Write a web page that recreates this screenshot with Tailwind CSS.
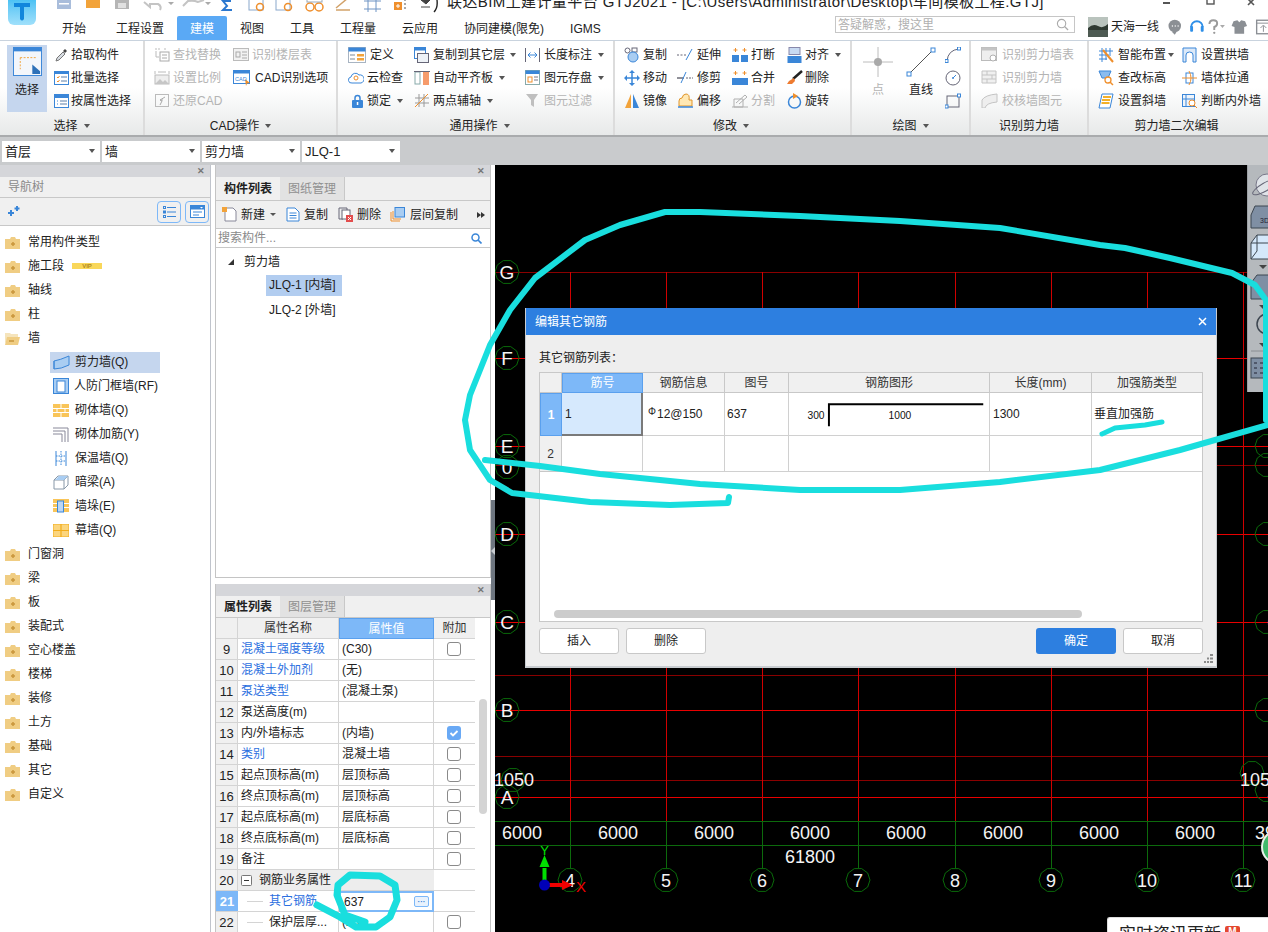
<!DOCTYPE html>
<html lang="zh"><head><meta charset="utf-8"><title>GTJ2021</title>
<script src="https://cdn.jsdelivr.net/npm/@tailwindcss/browser@4"></script></head>
<body class="m-0 bg-white">
<div class="relative w-[1268px] h-[932px] overflow-hidden flex flex-col text-[12px] leading-none text-[#222] font-['Liberation_Sans','Noto_Sans_CJK_SC',sans-serif]">

<!-- title strip -->
<header class="relative h-[40px] shrink-0 bg-white">
  <div class="absolute left-[8px] top-0 w-[28px] h-[25px] rounded-b-[6px] bg-gradient-to-b from-[#4cc2f4] to-[#9fe0fb] flex justify-center">
    <svg viewBox="0 0 28 25" class="w-[28px] h-[25px]"><path d="M6 3h16v4h-6v12q-2 3-4 0V7H6z" fill="#1186dc"/></svg>
  </div>
  <div class="flex h-[15px] overflow-hidden">
    <svg viewBox="0 0 440 15" class="w-[440px] h-[15px] shrink-0">
      <rect x="57" y="-4" width="14" height="13" fill="#a9bddb"/><rect x="59" y="3" width="10" height="1.5" fill="#fff"/>
      <rect x="86" y="-4" width="14" height="12" fill="#f2a33a"/>
      <rect x="115" y="-4" width="14" height="13" fill="#b5b5b5"/><rect x="118" y="3" width="8" height="5" fill="#e0e0e0"/>
      <path d="M144 2l6 5v-3h8q4 2 2 6M183 6l5-5q6-1 10 1l6-2" fill="none" stroke="#c4c4c4" stroke-width="2"/>
      <path d="M168 2l6 0-3 3zM205 2l6 0-3 3z" fill="#aaa"/>
      <path d="M231 1h-8l4 5-4 4h9" fill="none" stroke="#2b78d0" stroke-width="2"/>
      <rect x="249" y="-3" width="14" height="13" fill="#fff" stroke="#8aa8cc"/><circle cx="260" cy="7" r="3.5" fill="none" stroke="#ef8f2c" stroke-width="1.5"/>
      <rect x="276" y="-3" width="14" height="13" fill="#fff" stroke="#8aa8cc"/><circle cx="288" cy="7" r="3.5" fill="none" stroke="#ef8f2c" stroke-width="1.5"/>
      <circle cx="310" cy="7" r="4" fill="none" stroke="#ef8f2c" stroke-width="1.5"/><circle cx="319" cy="7" r="4" fill="none" stroke="#ef8f2c" stroke-width="1.5"/><rect x="307" y="-3" width="15" height="5" fill="none" stroke="#9ab"/>
      <path d="M336 8l12-10M336 10h14" stroke="#d2a26a" stroke-width="1.5" fill="none"/>
      <path d="M364 1h17M364 9h17M368 0v12M376 0v12" stroke="#6f94c4" fill="none"/>
      <rect x="394" y="2" width="8" height="8" fill="#ef8f2c"/><path d="M396 6h4M398 4v4" stroke="#fff"/><path d="M404 0h2M404 4h2M404 8h2" stroke="#555"/>
      <path d="M421 0h9l-4 4zM421 7h9" fill="#444" stroke="#444"/><path d="M434 12q4-4 3-12" stroke="#222" stroke-width="1.4" fill="none"/>
    </svg>
    <div class="ml-[7px] text-[15px] leading-[18px] -mt-[7px] whitespace-nowrap tracking-[0.4px]">联达BIM土建计量平台 GTJ2021 - [C:\Users\Administrator\Desktop\车间模板工程.GTJ]</div>
  </div>
  <div class="absolute right-[6px] top-0 flex items-start">
    <svg viewBox="0 0 100 6" class="w-[100px] h-[6px]"><path d="M1 3h7" stroke="#555" stroke-width="2"/><rect x="45" y="-3" width="7" height="7" fill="none" stroke="#555" stroke-width="1.4"/><path d="M86 -1l6 6M92 -1l-6 6" stroke="#555" stroke-width="1.6"/></svg>
  </div>
  <nav class="absolute left-[62px] top-[16px] h-[24px] flex items-end">
    <span class="pb-[5px]">开始</span><span class="ml-[30px] pb-[5px]">工程设置</span>
    <span class="ml-[13px] w-[50px] h-[24px] flex items-end justify-center pb-[5px] rounded-t-[2px] bg-[#5aa9f5] text-white">建模</span>
    <span class="ml-[13px] pb-[5px]">视图</span><span class="ml-[26px] pb-[5px]">工具</span><span class="ml-[26px] pb-[5px]">工程量</span><span class="ml-[26px] pb-[5px]">云应用</span><span class="ml-[26px] pb-[5px]">协同建模(限免)</span><span class="ml-[26px] pb-[5px]">IGMS</span>
  </nav>
  <div class="absolute left-[835px] top-[16px] w-[240px] h-[17px] border border-[#c6c6c6] flex items-center justify-between px-[2px] text-[#b0b0b0]">
    <span>答疑解惑，搜这里</span>
    <svg viewBox="0 0 14 14" class="w-[13px] h-[13px] mr-[3px]"><circle cx="6" cy="6" r="4.5" fill="none" stroke="#aaa" stroke-width="1.2"/><path d="M9.5 9.5L13 13" stroke="#aaa" stroke-width="1.4"/></svg>
  </div>
  <div class="absolute left-[1088px] top-[17px] flex items-center h-[20px] whitespace-nowrap">
    <svg viewBox="0 0 20 20" class="w-[20px] h-[20px] shrink-0"><rect width="20" height="20" fill="#b9c3bd"/><rect y="11" width="20" height="9" fill="#4d5a52"/><path d="M0 11q5-5 10-2t10-2v6H0z" fill="#2f3a32"/></svg>
    <span class="ml-[3px] shrink-0">天海一线</span>
    <svg viewBox="0 0 110 20" class="w-[106px] h-[20px] ml-[9px] shrink-0">
      <circle cx="7" cy="9" r="6.5" fill="#8b8f94"/><path d="M4 15l3 3 2-3z" fill="#8b8f94"/><path d="M4 9h1M7 9h1M10 9h1" stroke="#fff" stroke-width="1.4"/>
      <path d="M24 10a6 6 0 0 1 12 0" fill="none" stroke="#2e8fe8" stroke-width="2"/><rect x="23" y="9" width="3" height="6" rx="1" fill="#2e8fe8"/><rect x="34" y="9" width="3" height="6" rx="1" fill="#2e8fe8"/>
      <path d="M43 7q0-4 4-4t4 3q0 3-3 4v3" fill="none" stroke="#9a9a9a" stroke-width="2"/><circle cx="48" cy="16" r="1.2" fill="#9a9a9a"/><path d="M54 8h5l-2.500 3z" fill="#aaa"/>
      <path d="M68 4l4-1 2 2 2-2 4 1 2 5-3 1v7H69v-7l-3-1z" fill="#8b8f94"/>
      <rect x="92" y="3" width="14" height="14" fill="none" stroke="#8b8f94" stroke-width="1.4"/><path d="M92 6h14M99 15V9M96 11l3-3 3 3" stroke="#8b8f94" fill="none"/>
    </svg>
  </div>
</header>

<!-- ribbon -->
<section class="h-[97px] shrink-0 flex border-t border-[#c9d3de] border-b-2 border-b-[#a9abad] bg-gradient-to-b from-white via-white to-[#e7e9e9]">

  <!-- 选择 -->
  <div class="w-[145px] shrink-0 flex flex-col border-r-2 border-[#dcdcdc]">
    <div class="h-[75px] pt-[4px] pl-[7px] flex">
      <div class="w-[40px] h-[67px] bg-[#c5d6ee] flex flex-col items-center pt-[2px]">
        <svg viewBox="0 0 30 30" class="w-[29px] h-[29px]"><rect x=".5" y=".5" width="29" height="29" fill="#f3f6fb" stroke="#3a86d8"/><rect x=".5" y=".5" width="29" height="4" fill="#3a86d8"/><path d="M7.500 11h16M7.500 11v12" fill="none" stroke="#f2a33a" stroke-dasharray="2 1.500"/><path d="M20 18l8 7v3h-8z" fill="#2d70b8"/></svg>
        <span class="mt-[8px]">选择</span>
      </div>
      <div class="ml-[7px] -mt-[2px] flex flex-col">
        <div class="flex items-center h-[23px]"><span class="w-[17px]"><svg viewBox="0 0 14 14" class="w-[14px] h-[14px]"><path d="M2 13l1-3 6-6 2 2-6 6z" fill="#d7dce2" stroke="#777"/><path d="M9 3l2-2 2 2-2 2z" fill="#444"/></svg></span>拾取构件</div>
        <div class="flex items-center h-[23px]"><span class="w-[17px]"><svg viewBox="0 0 15 14" class="w-[15px] h-[14px]"><rect x=".5" y=".5" width="14" height="13" fill="#fff" stroke="#3a86d8"/><rect x=".5" y=".5" width="14" height="2.500" fill="#3a86d8"/><path d="M3 6l1 1 1.500-2M3 10l1 1 1.500-2" stroke="#ef8f2c" fill="none"/><path d="M7 6h6M7 10h6" stroke="#5b7fa8"/></svg></span>批量选择</div>
        <div class="flex items-center h-[23px]"><span class="w-[17px]"><svg viewBox="0 0 15 14" class="w-[15px] h-[14px]"><rect x=".5" y=".5" width="14" height="13" fill="#fff" stroke="#3a86d8"/><rect x=".5" y=".5" width="14" height="3.500" fill="#3a86d8"/><path d="M3 7h1M3 10h1" stroke="#3a86d8"/><path d="M6 7h7M6 10h7" stroke="#5b7fa8"/></svg></span>按属性选择</div>
      </div>
    </div>
    <div class="flex items-center justify-center h-[19px] gap-[6px]">选择<span class="w-0 h-0 border-x-[3.500px] border-x-transparent border-t-[4px] border-t-[#555]"></span></div>
  </div>

  <!-- CAD -->
  <div class="w-[193px] shrink-0 flex flex-col border-r-2 border-[#dcdcdc] text-[#b4b4b4]">
    <div class="h-[75px] pt-[2px] pl-[9px] flex">
      <div class="w-[79px] flex flex-col">
        <div class="flex items-center h-[23px]"><span class="w-[19px]"><svg viewBox="0 0 16 15" class="w-[16px] h-[15px]"><path d="M1 2h6M10 2h3" stroke="#bbb" stroke-dasharray="2 1"/><rect x="6" y="5" width="9" height="9" fill="none" stroke="#aaa"/><path d="M8 8h5M8 11h5" stroke="#aaa"/><path d="M2 4v6h3" stroke="#bbb" fill="none"/></svg></span>查找替换</div>
        <div class="flex items-center h-[23px]"><span class="w-[19px]"><svg viewBox="0 0 16 15" class="w-[16px] h-[15px]"><rect x="1" y="5" width="14" height="9" fill="#eee" stroke="#bbb"/><path d="M1 14l5-5 3 3 2-2 4 4z" fill="#c6c6c6"/><path d="M1 1v3M15 1v3M4 2h8" stroke="#bbb"/></svg></span>设置比例</div>
        <div class="flex items-center h-[23px]"><span class="w-[19px]"><svg viewBox="0 0 16 15" class="w-[16px] h-[15px]"><rect x="1.500" y="1.500" width="13" height="12" fill="none" stroke="#bbb"/><path d="M11 4l-5 3 2 1-2 4M6 7l3 0" stroke="#aaa" fill="none"/></svg></span>还原CAD</div>
      </div>
      <div class="flex flex-col">
        <div class="flex items-center h-[23px]"><span class="w-[19px]"><svg viewBox="0 0 16 14" class="w-[16px] h-[14px]"><rect x=".5" y=".5" width="15" height="12" fill="#f2f2f2" stroke="#bbb"/><rect x="3" y="4" width="4" height="5" fill="none" stroke="#aaa"/><path d="M9 4h5M9 7h5M9 10h5" stroke="#aaa"/></svg></span>识别楼层表</div>
        <div class="flex items-center h-[23px] text-[#222]"><span class="w-[22px]"><svg viewBox="0 0 18 16" class="w-[18px] h-[16px]"><rect x=".5" y=".5" width="16" height="13" fill="#fff" stroke="#3a86d8"/><rect x=".5" y=".5" width="16" height="3" fill="#3a86d8"/><path d="M12 9l5 4-3 .5-1 2.500z" fill="#ef8f2c"/><text x="2" y="11" font-size="5.500" fill="#3a86d8">CAD</text></svg></span>CAD识别选项</div>
      </div>
    </div>
    <div class="flex items-center justify-center h-[19px] gap-[6px] text-[#222]">CAD操作<span class="w-0 h-0 border-x-[3.500px] border-x-transparent border-t-[4px] border-t-[#555]"></span></div>
  </div>

  <!-- 通用操作 -->
  <div class="w-[277px] shrink-0 flex flex-col border-r-2 border-[#dcdcdc]">
    <div class="h-[75px] pt-[2px] pl-[10px] flex">
      <div class="w-[66px] flex flex-col">
        <div class="flex items-center h-[23px]"><span class="w-[22px]"><svg viewBox="0 0 18 16" class="w-[18px] h-[16px]"><rect x=".5" y=".5" width="17" height="15" fill="#fff" stroke="#a8b4c2"/><rect x=".5" y=".5" width="17" height="4" fill="#3a86d8"/><rect x="9" y="7" width="7" height="2.500" fill="#f2a33a"/><rect x="9" y="11" width="7" height="2.500" fill="#f2a33a"/><path d="M2 8h5M2 12h5" stroke="#7a8a9a"/></svg></span>定义</div>
        <div class="flex items-center h-[23px]"><span class="w-[19px]"><svg viewBox="0 0 16 12" class="w-[16px] h-[12px]"><path d="M4 11a3 3 0 0 1-1-6 4.500 4.500 0 0 1 8-2 4 4 0 0 1 2 8z" fill="#fff" stroke="#3a86d8"/><circle cx="8" cy="6" r="2" fill="none" stroke="#ef8f2c"/></svg></span>云检查</div>
        <div class="flex items-center h-[23px]"><span class="w-[19px] pl-[4px]"><svg viewBox="0 0 11 14" class="w-[11px] h-[14px]"><path d="M3 6V4a2.500 2.500 0 0 1 5 0v2" fill="none" stroke="#3a86d8" stroke-width="1.500"/><rect y="6" width="11" height="8" rx="1" fill="#3a86d8"/><rect x="4.800" y="8" width="1.500" height="3" fill="#fff"/></svg></span>锁定<span class="ml-[6px] w-0 h-0 border-x-[3px] border-x-transparent border-t-[4px] border-t-[#555]"></span></div>
      </div>
      <div class="w-[111px] flex flex-col">
        <div class="flex items-center h-[23px]"><span class="w-[19px]"><svg viewBox="0 0 15 16" class="w-[15px] h-[16px]"><rect x=".5" y=".5" width="11" height="11" fill="#fff" stroke="#3a86d8"/><rect x=".5" y=".5" width="11" height="3" fill="#3a86d8"/><rect x="3.500" y="6.500" width="11" height="9" fill="#eef2f7" stroke="#667"/></svg></span>复制到其它层<span class="ml-[5px] w-0 h-0 border-x-[3px] border-x-transparent border-t-[4px] border-t-[#555]"></span></div>
        <div class="flex items-center h-[23px]"><span class="w-[19px]"><svg viewBox="0 0 16 14" class="w-[16px] h-[14px]"><rect x="1" y="1" width="5" height="12" fill="#fff" stroke="#8aa"/><rect x="9" y="1" width="6" height="13" fill="#f69b6b"/><path d="M0 .5h16" stroke="#667"/></svg></span>自动平齐板<span class="ml-[6px] w-0 h-0 border-x-[3px] border-x-transparent border-t-[4px] border-t-[#555]"></span></div>
        <div class="flex items-center h-[23px]"><span class="w-[19px]"><svg viewBox="0 0 15 15" class="w-[15px] h-[15px]"><path d="M1 5h14M1 10h14M5 1v13M10 1v13" stroke="#999"/><path d="M1 14L14 1" stroke="#ef8f2c"/></svg></span>两点辅轴<span class="ml-[6px] w-0 h-0 border-x-[3px] border-x-transparent border-t-[4px] border-t-[#555]"></span></div>
      </div>
      <div class="flex flex-col">
        <div class="flex items-center h-[23px]"><span class="w-[19px]"><svg viewBox="0 0 15 14" class="w-[15px] h-[14px]"><path d="M.5 0v14M14.500 0v14" stroke="#667"/><path d="M3 7h9M3 7l2.500-2.500M3 7l2.500 2.500M12 7l-2.500-2.500M12 7l-2.500 2.500" stroke="#3a86d8" fill="none"/></svg></span>长度标注<span class="ml-[6px] w-0 h-0 border-x-[3px] border-x-transparent border-t-[4px] border-t-[#555]"></span></div>
        <div class="flex items-center h-[23px]"><span class="w-[19px]"><svg viewBox="0 0 15 15" class="w-[15px] h-[15px]"><rect x=".5" y=".5" width="14" height="14" fill="#fff" stroke="#8aa"/><rect x=".5" y=".5" width="14" height="3.500" fill="#3a86d8"/><rect x="3" y="7" width="4" height="5" fill="none" stroke="#ef8f2c"/><path d="M9 7h4M9 10h4" stroke="#778"/></svg></span>图元存盘<span class="ml-[6px] w-0 h-0 border-x-[3px] border-x-transparent border-t-[4px] border-t-[#555]"></span></div>
        <div class="flex items-center h-[23px] text-[#b4b4b4]"><span class="w-[19px]"><svg viewBox="0 0 15 15" class="w-[15px] h-[15px]"><path d="M1 1h12L9 7v7l-3-2V7z" fill="#bfbfbf"/></svg></span>图元过滤</div>
      </div>
    </div>
    <div class="flex items-center justify-center h-[19px] gap-[6px] pl-[8px]">通用操作<span class="w-0 h-0 border-x-[3.500px] border-x-transparent border-t-[4px] border-t-[#555]"></span></div>
  </div>

  <!-- 修改 -->
  <div class="w-[237px] shrink-0 flex flex-col border-r-2 border-[#dcdcdc]">
    <div class="h-[75px] pt-[2px] pl-[9px] flex">
      <div class="w-[53px] flex flex-col">
        <div class="flex items-center h-[23px]"><span class="w-[19px]"><svg viewBox="0 0 16 16" class="w-[16px] h-[16px]"><circle cx="3.500" cy="3.500" r="2.500" fill="none" stroke="#667"/><rect x="8" y="1" width="5" height="4" fill="none" stroke="#667"/><circle cx="9" cy="10" r="5" fill="#a9cdf2" stroke="#3a86d8"/></svg></span>复制</div>
        <div class="flex items-center h-[23px]"><span class="w-[19px]"><svg viewBox="0 0 16 16" class="w-[16px] h-[16px]"><path d="M8 1v14M1 8h14" stroke="#3a86d8" stroke-width="1.500"/><path d="M8 0l3 3H5zM8 16l3-3H5zM0 8l3-3v6zM16 8l-3-3v6z" fill="#3a86d8"/></svg></span>移动</div>
        <div class="flex items-center h-[23px]"><span class="w-[19px]"><svg viewBox="0 0 16 15" class="w-[16px] h-[15px]"><path d="M7 1v14H1z" fill="#f2a33a"/><path d="M9 1v14h6z" fill="#3a86d8"/></svg></span>镜像</div>
      </div>
      <div class="w-[55px] flex flex-col">
        <div class="flex items-center h-[23px]"><span class="w-[20px]"><svg viewBox="0 0 17 15" class="w-[17px] h-[15px]"><path d="M0 8h10" stroke="#667" stroke-dasharray="2 1.500"/><path d="M9 13L15 2" stroke="#3a86d8"/></svg></span>延伸</div>
        <div class="flex items-center h-[23px]"><span class="w-[20px]"><svg viewBox="0 0 17 15" class="w-[17px] h-[15px]"><path d="M0 8h7" stroke="#223"/><path d="M9 8h7" stroke="#667" stroke-dasharray="2 1"/><path d="M4 13L9 2" stroke="#3a86d8"/></svg></span>修剪</div>
        <div class="flex items-center h-[23px]"><span class="w-[20px]"><svg viewBox="0 0 17 15" class="w-[17px] h-[15px]"><path d="M2 13V8q0-3 3-3 1-4 4-4 4 0 3 6h3v6z" fill="#ffe8b4" stroke="#e0952a"/><path d="M1 14h15" stroke="#3a86d8" stroke-width="1.500"/></svg></span>偏移</div>
      </div>
      <div class="w-[55px] flex flex-col">
        <div class="flex items-center h-[23px]"><span class="w-[19px]"><svg viewBox="0 0 16 15" class="w-[16px] h-[15px]"><rect y="8" width="7" height="7" fill="#3a86d8"/><rect x="9" y="8" width="7" height="7" fill="#3a86d8"/><path d="M3.500 1v4M1.500 3h4M12.500 1v4M10.500 3h4" stroke="#ef8f2c"/></svg></span>打断</div>
        <div class="flex items-center h-[23px]"><span class="w-[19px]"><svg viewBox="0 0 16 15" class="w-[16px] h-[15px]"><rect y="8" width="16" height="7" fill="#3a86d8"/><path d="M3.500 1v4M1.500 3h4M12.500 1v4M10.500 3h4" stroke="#ef8f2c"/></svg></span>合并</div>
        <div class="flex items-center h-[23px] text-[#b4b4b4]"><span class="w-[19px]"><svg viewBox="0 0 16 15" class="w-[16px] h-[15px]"><path d="M2 14V6h9v8zM0 14h16M4 10l9-8 2 2-8 7" fill="none" stroke="#b0b0b0"/></svg></span>分割</div>
      </div>
      <div class="flex flex-col">
        <div class="flex items-center h-[23px]"><span class="w-[18px]"><svg viewBox="0 0 15 16" class="w-[15px] h-[16px]"><rect x="2" y=".5" width="11" height="7" fill="#c8daf2" stroke="#88a"/><rect x=".5" y="9" width="14" height="7" fill="#3a86d8"/></svg></span>对齐<span class="ml-[6px] w-0 h-0 border-x-[3px] border-x-transparent border-t-[4px] border-t-[#555]"></span></div>
        <div class="flex items-center h-[23px]"><span class="w-[18px]"><svg viewBox="0 0 16 15" class="w-[16px] h-[15px]"><path d="M15 1L6 9" stroke="#222" stroke-width="2.500"/><path d="M7 8l-5 3-2 3h5l3-3z" fill="#ee7b30"/></svg></span>删除</div>
        <div class="flex items-center h-[23px]"><span class="w-[18px]"><svg viewBox="0 0 15 16" class="w-[15px] h-[16px]"><circle cx="7.500" cy="9" r="6" fill="none" stroke="#3a86d8" stroke-width="1.500"/><path d="M6 0l5 3-5 3z" fill="#ef8f2c"/></svg></span>旋转</div>
      </div>
    </div>
    <div class="flex items-center justify-center h-[19px] gap-[6px] pr-[3px]">修改<span class="w-0 h-0 border-x-[3.500px] border-x-transparent border-t-[4px] border-t-[#555]"></span></div>
  </div>

  <!-- 绘图 -->
  <div class="w-[119px] shrink-0 flex flex-col border-r-2 border-[#dcdcdc]">
    <div class="h-[75px] pt-[6px] pl-[11px] flex">
      <div class="w-[30px] flex flex-col items-center text-[#b4b4b4]">
        <svg viewBox="0 0 30 30" class="w-[30px] h-[30px]"><path d="M15 0v30M0 15h30" stroke="#bcbcbc"/><circle cx="15" cy="15" r="4" fill="#a9a9a9"/></svg>
        <span class="mt-[7px]">点</span>
      </div>
      <div class="ml-[13px] w-[30px] flex flex-col items-center">
        <svg viewBox="0 0 30 30" class="w-[30px] h-[30px]"><path d="M3 27L27 3" stroke="#555"/><rect x="1" y="25" width="4" height="4" fill="#fff" stroke="#3a86d8"/><rect x="25" y="1" width="4" height="4" fill="#fff" stroke="#3a86d8"/></svg>
        <span class="mt-[7px]">直线</span>
      </div>
      <div class="ml-[9px] -mt-[4px] flex flex-col">
        <span class="h-[23px] flex items-center"><svg viewBox="0 0 16 16" class="w-[16px] h-[16px]"><path d="M2 14Q3 3 14 2" fill="none" stroke="#667"/><rect x="0" y="12.500" width="3" height="3" fill="#fff" stroke="#3a86d8"/><rect x="12.500" y="0" width="3" height="3" fill="#fff" stroke="#3a86d8"/></svg></span>
        <span class="h-[23px] flex items-center"><svg viewBox="0 0 16 16" class="w-[16px] h-[16px]"><circle cx="8" cy="8" r="7" fill="none" stroke="#667"/><path d="M8 8l3-3" stroke="#3a86d8"/><circle cx="8" cy="8" r="1" fill="#3a86d8"/></svg></span>
        <span class="h-[23px] flex items-center"><svg viewBox="0 0 16 16" class="w-[16px] h-[16px]"><rect x="2" y="3" width="12" height="11" fill="none" stroke="#667"/><rect x="0" y="12" width="3" height="3" fill="#fff" stroke="#3a86d8"/><rect x="12.500" y="1" width="3" height="3" fill="#fff" stroke="#3a86d8"/></svg></span>
      </div>
    </div>
    <div class="flex items-center justify-center h-[19px] gap-[6px]">绘图<span class="w-0 h-0 border-x-[3.500px] border-x-transparent border-t-[4px] border-t-[#555]"></span></div>
  </div>

  <!-- 识别剪力墙 -->
  <div class="w-[118px] shrink-0 flex flex-col border-r-2 border-[#dcdcdc]">
    <div class="h-[75px] pt-[2px] pl-[10px] flex flex-col text-[#b4b4b4]">
      <div class="flex items-center h-[23px]"><span class="w-[21px]"><svg viewBox="0 0 17 15" class="w-[17px] h-[15px]"><rect x=".5" y=".5" width="15" height="13" fill="#eee" stroke="#bbb"/><rect x=".5" y=".5" width="15" height="3" fill="#c4c4c4"/><circle cx="12" cy="11" r="3" fill="#fff" stroke="#b0b0b0"/></svg></span>识别剪力墙表</div>
      <div class="flex items-center h-[23px]"><span class="w-[21px]"><svg viewBox="0 0 17 15" class="w-[17px] h-[15px]"><path d="M1 1h14v12H1zM1 5h14M1 9h14M6 1v4M11 5v4M6 9v4" fill="#f0f0f0" stroke="#c4c4c4"/></svg></span>识别剪力墙</div>
      <div class="flex items-center h-[23px]"><span class="w-[21px]"><svg viewBox="0 0 17 15" class="w-[17px] h-[15px]"><path d="M1 15V7q3-5 15-6v8Q5 10 4 15z" fill="#eee" stroke="#c4c4c4"/></svg></span>校核墙图元</div>
    </div>
    <div class="flex items-center justify-center h-[19px]">识别剪力墙</div>
  </div>

  <!-- 二次编辑 -->
  <div class="flex-1 flex flex-col">
    <div class="h-[75px] pt-[2px] pl-[9px] flex">
      <div class="w-[84px] flex flex-col">
        <div class="flex items-center h-[23px]"><span class="w-[20px]"><svg viewBox="0 0 16 16" class="w-[16px] h-[16px]"><path d="M1 4h14M1 8h10M1 12h8M4 1v14M8 1v12M12 1v8" stroke="#3a86d8"/><path d="M5 3l10 12" stroke="#ef8f2c" stroke-width="2"/></svg></span>智能布置<span class="ml-[2px] w-0 h-0 border-x-[3px] border-x-transparent border-t-[4px] border-t-[#555]"></span></div>
        <div class="flex items-center h-[23px]"><span class="w-[20px]"><svg viewBox="0 0 16 16" class="w-[16px] h-[16px]"><path d="M1 1h12l-3 7H4z" fill="#8bbcef" stroke="#3a86d8"/><circle cx="10" cy="10" r="3" fill="#fff" stroke="#ef8f2c" stroke-width="1.300"/><path d="M12 12l3 3" stroke="#ef8f2c" stroke-width="1.500"/></svg></span>查改标高</div>
        <div class="flex items-center h-[23px]"><span class="w-[20px]"><svg viewBox="0 0 16 16" class="w-[16px] h-[16px]"><path d="M4 1h11l-3 14H1z" fill="#fff" stroke="#3a86d8"/><path d="M5 4h8M4 7h8M3.500 10h8" stroke="#f2b02a" stroke-width="2"/></svg></span>设置斜墙</div>
      </div>
      <div class="flex flex-col">
        <div class="flex items-center h-[23px]"><span class="w-[19px]"><svg viewBox="0 0 15 16" class="w-[15px] h-[16px]"><path d="M1 1h13v14h-3V8q0-3-3.500-3T4 8v7H1z" fill="#dce9f8" stroke="#3a86d8"/></svg></span>设置拱墙</div>
        <div class="flex items-center h-[23px]"><span class="w-[19px]"><svg viewBox="0 0 15 16" class="w-[15px] h-[16px]"><rect x="4" y="3" width="7" height="10" fill="none" stroke="#3a86d8"/><path d="M0 8h15M7 1q4 7 0 14" fill="none" stroke="#ef8f2c"/></svg></span>墙体拉通</div>
        <div class="flex items-center h-[23px]"><span class="w-[19px]"><svg viewBox="0 0 15 16" class="w-[15px] h-[16px]"><rect x=".5" y="1.500" width="12" height="12" fill="#eef4fb" stroke="#3a86d8"/><path d="M4 1v12M.5 6h12" stroke="#3a86d8"/><circle cx="10" cy="10" r="3" fill="#fff" stroke="#ef8f2c"/><path d="M12 12l3 3" stroke="#ef8f2c"/></svg></span>判断内外墙</div>
      </div>
    </div>
    <div class="flex items-center justify-center h-[19px] pr-[4px]">剪力墙二次编辑</div>
  </div>
</section>

<!-- selector bar -->
<section class="h-[28px] shrink-0 bg-[#c9cbcd] flex items-center pl-[2px] gap-[2px] text-[13px]">
  <div class="w-[98px] h-[21px] bg-white flex items-center justify-between px-[3px]">首层<span class="w-0 h-0 border-x-[3px] border-x-transparent border-t-[4px] border-t-[#555] mr-[2px]"></span></div>
  <div class="w-[98px] h-[21px] bg-white flex items-center justify-between px-[3px]">墙<span class="w-0 h-0 border-x-[3px] border-x-transparent border-t-[4px] border-t-[#555] mr-[2px]"></span></div>
  <div class="w-[98px] h-[21px] bg-white flex items-center justify-between px-[3px]">剪力墙<span class="w-0 h-0 border-x-[3px] border-x-transparent border-t-[4px] border-t-[#555] mr-[2px]"></span></div>
  <div class="w-[98px] h-[21px] bg-white flex items-center justify-between px-[3px]">JLQ-1<span class="w-0 h-0 border-x-[3px] border-x-transparent border-t-[4px] border-t-[#555] mr-[2px]"></span></div>
</section>

<!-- main -->
<main class="relative flex-1 flex min-h-0">

  <!-- nav tree -->
  <aside class="w-[211px] shrink-0 border-r border-[#c0c4cc] flex flex-col bg-white">
    <div class="h-[12px] bg-[#d5d6da] flex items-center justify-end pr-[5px] text-[9px] font-bold text-[#777]">✕</div>
    <div class="h-[21px] bg-[#f0f0f0] border-b border-[#c8c8c8] flex items-center pl-[8px] text-[#8a8a8a]">导航树</div>
    <div class="h-[28px] bg-[#f0f0f0] border-b border-[#c8c8c8] flex items-center justify-between pl-[7px] pr-[1px]">
      <svg viewBox="0 0 13 11" class="w-[13px] h-[11px]"><path d="M4 4v6M1 7h6M10 0v5M7.500 2.500h5" stroke="#3a86d8" stroke-width="2"/></svg>
      <div class="flex gap-[4px]">
        <span class="w-[24px] h-[22px] rounded-[4px] border border-[#7db8f8] flex items-center justify-center"><svg viewBox="0 0 13 12" class="w-[13px] h-[12px]"><path d="M4 1.500h9M4 6h9M4 10.500h9" stroke="#3a86d8"/><rect x=".5" y=".5" width="2" height="2" fill="none" stroke="#3a86d8"/><rect x=".5" y="5" width="2" height="2" fill="none" stroke="#3a86d8"/><rect x=".5" y="9.500" width="2" height="2" fill="none" stroke="#3a86d8"/></svg></span>
        <span class="w-[24px] h-[22px] rounded-[4px] border border-[#7db8f8] flex items-center justify-center"><svg viewBox="0 0 15 13" class="w-[15px] h-[13px]"><rect x=".5" y=".5" width="14" height="12" fill="#fff" stroke="#3a86d8"/><rect x=".5" y=".5" width="14" height="4" fill="#3a86d8"/><path d="M3 7h9M3 10h6" stroke="#3a86d8"/><path d="M10 2h3l-1.500 1.500z" fill="#fff"/></svg></span>
      </div>
    </div>
    <ul class="pt-[4px]">
      <li class="h-[24px] flex items-center pl-[5px]"><svg viewBox="0 0 15 13" class="w-[15px] h-[13px] mr-[8px]"><path d="M0 3h5l1-2h4l1 2h4v10H0z" fill="#f0cd83"/><path d="M6 8h4M8 6v4" stroke="#c9963c" stroke-width="1.500"/></svg>常用构件类型</li>
      <li class="h-[24px] flex items-center pl-[5px]"><svg viewBox="0 0 15 13" class="w-[15px] h-[13px] mr-[8px]"><path d="M0 3h5l1-2h4l1 2h4v10H0z" fill="#f0cd83"/><path d="M6 8h4M8 6v4" stroke="#c9963c" stroke-width="1.500"/></svg>施工段<span class="ml-[8px] w-[30px] h-[6px] bg-[#f9d75a] text-[6px] leading-[6px] text-center text-[#b08a20] font-bold">VIP</span></li>
      <li class="h-[24px] flex items-center pl-[5px]"><svg viewBox="0 0 15 13" class="w-[15px] h-[13px] mr-[8px]"><path d="M0 3h5l1-2h4l1 2h4v10H0z" fill="#f0cd83"/><path d="M6 8h4M8 6v4" stroke="#c9963c" stroke-width="1.500"/></svg>轴线</li>
      <li class="h-[24px] flex items-center pl-[5px]"><svg viewBox="0 0 15 13" class="w-[15px] h-[13px] mr-[8px]"><path d="M0 3h5l1-2h4l1 2h4v10H0z" fill="#f0cd83"/><path d="M6 8h4M8 6v4" stroke="#c9963c" stroke-width="1.500"/></svg>柱</li>
      <li class="h-[24px] flex items-center pl-[4px]"><svg viewBox="0 0 16 13" class="w-[16px] h-[13px] mr-[8px]"><path d="M1 1h5l1 1h7v3H4L1 12z" fill="#f5e4bc"/><path d="M3 5h13l-2 8H1z" fill="#f0cd83"/><path d="M5 9h5" stroke="#c9963c" stroke-width="1.500"/></svg>墙</li>
      <li class="h-[24px] flex items-center pl-[50px]"><span class="w-[110px] h-[21px] bg-[#c5d6ee] flex items-center pl-[3px]"><svg viewBox="0 0 17 15" class="w-[17px] h-[15px] mr-[5px]"><path d="M1 6q6-1 15-5v9q-8 4-15 4z" fill="#a9cdf2" stroke="#3a86d8"/><path d="M1 6v8" stroke="#3a86d8"/></svg>剪力墙(Q)</span></li>
      <li class="h-[24px] flex items-center pl-[53px]"><svg viewBox="0 0 16 16" class="w-[16px] h-[16px] mr-[5px]"><rect x=".5" y=".5" width="15" height="15" fill="#a9cdf2" stroke="#3a86d8"/><rect x="4" y="3" width="8" height="11" fill="#fff" stroke="#3a86d8"/></svg>人防门框墙(RF)</li>
      <li class="h-[24px] flex items-center pl-[53px]"><svg viewBox="0 0 16 13" class="w-[16px] h-[13px] mr-[6px]"><rect width="16" height="13" fill="#f9c559"/><path d="M0 4.500h16M0 8.500h16M8 0v4.500M4 4.500v4M12 4.500v4M8 8.500V13" stroke="#fff"/></svg>砌体墙(Q)</li>
      <li class="h-[24px] flex items-center pl-[53px]"><svg viewBox="0 0 16 15" class="w-[16px] h-[15px] mr-[6px]"><path d="M0 1h15v14M0 4h12v11M0 7h9v8" fill="none" stroke="#889"/></svg>砌体加筋(Y)</li>
      <li class="h-[24px] flex items-center pl-[53px]"><svg viewBox="0 0 16 15" class="w-[16px] h-[15px] mr-[6px]"><path d="M3 0v15M13 0v15" stroke="#3a86d8"/><path d="M8 0v15M3 5h10M3 10h10" stroke="#3a86d8" stroke-dasharray="1.500 1"/></svg>保温墙(Q)</li>
      <li class="h-[24px] flex items-center pl-[53px]"><svg viewBox="0 0 16 15" class="w-[16px] h-[15px] mr-[6px]"><path d="M1 5l4-4h10v9l-4 4H1zM1 5h10v9M11 5l4-4" fill="#fff" stroke="#8898a8"/><path d="M2 5l4-4h9l-4 4z" fill="#a9cdf2"/></svg>暗梁(A)</li>
      <li class="h-[24px] flex items-center pl-[53px]"><svg viewBox="0 0 16 14" class="w-[16px] h-[14px] mr-[6px]"><rect width="16" height="13" fill="#f9c559"/><path d="M0 4.500h16M0 8.500h16" stroke="#fff"/><rect x="4.500" y="2" width="6" height="11" fill="#bcd6f3" stroke="#3a86d8"/></svg>墙垛(E)</li>
      <li class="h-[24px] flex items-center pl-[53px]"><svg viewBox="0 0 16 13" class="w-[16px] h-[13px] mr-[6px]"><rect width="16" height="13" fill="#fbd57e" stroke="#f2ad1c"/><path d="M0 6.500h16M8 0v13" stroke="#f2ad1c" stroke-width="1.200"/></svg>幕墙(Q)</li>
      <li class="h-[24px] flex items-center pl-[5px]"><svg viewBox="0 0 15 13" class="w-[15px] h-[13px] mr-[8px]"><path d="M0 3h5l1-2h4l1 2h4v10H0z" fill="#f0cd83"/><path d="M6 8h4M8 6v4" stroke="#c9963c" stroke-width="1.500"/></svg>门窗洞</li>
      <li class="h-[24px] flex items-center pl-[5px]"><svg viewBox="0 0 15 13" class="w-[15px] h-[13px] mr-[8px]"><path d="M0 3h5l1-2h4l1 2h4v10H0z" fill="#f0cd83"/><path d="M6 8h4M8 6v4" stroke="#c9963c" stroke-width="1.500"/></svg>梁</li>
      <li class="h-[24px] flex items-center pl-[5px]"><svg viewBox="0 0 15 13" class="w-[15px] h-[13px] mr-[8px]"><path d="M0 3h5l1-2h4l1 2h4v10H0z" fill="#f0cd83"/><path d="M6 8h4M8 6v4" stroke="#c9963c" stroke-width="1.500"/></svg>板</li>
      <li class="h-[24px] flex items-center pl-[5px]"><svg viewBox="0 0 15 13" class="w-[15px] h-[13px] mr-[8px]"><path d="M0 3h5l1-2h4l1 2h4v10H0z" fill="#f0cd83"/><path d="M6 8h4M8 6v4" stroke="#c9963c" stroke-width="1.500"/></svg>装配式</li>
      <li class="h-[24px] flex items-center pl-[5px]"><svg viewBox="0 0 15 13" class="w-[15px] h-[13px] mr-[8px]"><path d="M0 3h5l1-2h4l1 2h4v10H0z" fill="#f0cd83"/><path d="M6 8h4M8 6v4" stroke="#c9963c" stroke-width="1.500"/></svg>空心楼盖</li>
      <li class="h-[24px] flex items-center pl-[5px]"><svg viewBox="0 0 15 13" class="w-[15px] h-[13px] mr-[8px]"><path d="M0 3h5l1-2h4l1 2h4v10H0z" fill="#f0cd83"/><path d="M6 8h4M8 6v4" stroke="#c9963c" stroke-width="1.500"/></svg>楼梯</li>
      <li class="h-[24px] flex items-center pl-[5px]"><svg viewBox="0 0 15 13" class="w-[15px] h-[13px] mr-[8px]"><path d="M0 3h5l1-2h4l1 2h4v10H0z" fill="#f0cd83"/><path d="M6 8h4M8 6v4" stroke="#c9963c" stroke-width="1.500"/></svg>装修</li>
      <li class="h-[24px] flex items-center pl-[5px]"><svg viewBox="0 0 15 13" class="w-[15px] h-[13px] mr-[8px]"><path d="M0 3h5l1-2h4l1 2h4v10H0z" fill="#f0cd83"/><path d="M6 8h4M8 6v4" stroke="#c9963c" stroke-width="1.500"/></svg>土方</li>
      <li class="h-[24px] flex items-center pl-[5px]"><svg viewBox="0 0 15 13" class="w-[15px] h-[13px] mr-[8px]"><path d="M0 3h5l1-2h4l1 2h4v10H0z" fill="#f0cd83"/><path d="M6 8h4M8 6v4" stroke="#c9963c" stroke-width="1.500"/></svg>基础</li>
      <li class="h-[24px] flex items-center pl-[5px]"><svg viewBox="0 0 15 13" class="w-[15px] h-[13px] mr-[8px]"><path d="M0 3h5l1-2h4l1 2h4v10H0z" fill="#f0cd83"/><path d="M6 8h4M8 6v4" stroke="#c9963c" stroke-width="1.500"/></svg>其它</li>
      <li class="h-[24px] flex items-center pl-[5px]"><svg viewBox="0 0 15 13" class="w-[15px] h-[13px] mr-[8px]"><path d="M0 3h5l1-2h4l1 2h4v10H0z" fill="#f0cd83"/><path d="M6 8h4M8 6v4" stroke="#c9963c" stroke-width="1.500"/></svg>自定义</li>
    </ul>
  </aside>

  <!-- middle panels -->
  <div class="w-[276px] ml-[4px] shrink-0 flex flex-col">
    <section class="h-[413px] shrink-0 flex flex-col border-x border-[#c4c4c4] border-b">
      <div class="h-[12px] shrink-0 bg-[#d5d6da] flex items-center justify-end pr-[5px] text-[9px] font-bold text-[#777]">✕</div>
      <div class="h-[24px] shrink-0 bg-[#f0f0f0] border-b border-[#c8c8c8] flex font-bold">
        <span class="w-[64px] flex items-center justify-center">构件列表</span>
        <span class="w-[65px] flex items-center justify-center bg-[#e2e2e2] text-[#909090] font-normal border-r border-[#c8c8c8]">图纸管理</span>
      </div>
      <div class="h-[28px] shrink-0 bg-[#f0f0f0] border-b border-[#c8c8c8] flex items-center pl-[6px]">
        <svg viewBox="0 0 15 15" class="w-[15px] h-[15px] mr-[4px]"><path d="M3 1h8l3 3v10H3z" fill="#fff" stroke="#889"/><rect width="5" height="5" fill="#f2a33a"/></svg>新建<span class="ml-[5px] w-0 h-0 border-x-[3px] border-x-transparent border-t-[3px] border-t-[#555]"></span>
        <svg viewBox="0 0 14 15" class="w-[14px] h-[15px] ml-[10px] mr-[4px]"><path d="M1 1h8l4 4v9H1z" fill="#fff" stroke="#3a86d8"/><path d="M3.500 6h7M3.500 8.500h7M3.500 11h7" stroke="#3a86d8"/></svg>复制
        <svg viewBox="0 0 15 15" class="w-[15px] h-[15px] ml-[10px] mr-[4px]"><path d="M1 1h8v3M1 1v11h4" fill="none" stroke="#667"/><rect x="4" y="3" width="8" height="9" fill="#fff" stroke="#667"/><rect x="8" y="8" width="7" height="7" fill="#e34d4d"/><path d="M10 10l3 3M13 10l-3 3" stroke="#fff"/></svg>删除
        <svg viewBox="0 0 15 15" class="w-[15px] h-[15px] ml-[9px] mr-[5px]"><path d="M1 5v9h9M3 4v8h8" fill="none" stroke="#ef8f2c"/><rect x="5" y=".5" width="9.500" height="9.500" fill="#a9cdf2" stroke="#3a86d8"/></svg>层间复制
        <span class="ml-auto mr-[5px] flex"><span class="w-0 h-0 border-y-[3px] border-y-transparent border-l-[4px] border-l-[#333]"></span><span class="w-0 h-0 border-y-[3px] border-y-transparent border-l-[4px] border-l-[#333]"></span></span>
      </div>
      <div class="h-[19px] shrink-0 border-b border-[#c8c8c8] bg-white flex items-center justify-between pl-[2px] pr-[8px] text-[#8a8a8a]">搜索构件...<svg viewBox="0 0 11 11" class="w-[11px] h-[11px]"><circle cx="4.500" cy="4.500" r="3.500" fill="none" stroke="#3a86d8" stroke-width="1.500"/><path d="M7 7l3.500 3.500" stroke="#3a86d8" stroke-width="1.700"/></svg></div>
      <div class="flex-1 bg-white pt-[2px]">
        <div class="h-[23px] flex items-center pl-[12px]"><span class="w-0 h-0 border-b-[6px] border-b-[#333] border-l-[6px] border-l-transparent mr-[10px]"></span>剪力墙</div>
        <div class="h-[24px] flex items-center pl-[50px]"><span class="h-[21px] w-[76px] bg-[#b2cdf0] flex items-center pl-[3px]">JLQ-1 [内墙]</span></div>
        <div class="h-[25px] flex items-center pl-[53px]">JLQ-2 [外墙]</div>
      </div>
    </section>
    <div class="h-[6px] shrink-0"></div>
    <section class="flex-1 min-h-0 flex flex-col border-x border-[#c4c4c4] overflow-hidden">
      <div class="h-[12px] shrink-0 bg-[#d5d6da] flex items-center justify-end pr-[5px] text-[9px] font-bold text-[#777]">✕</div>
      <div class="h-[22px] shrink-0 bg-[#f0f0f0] border-b border-[#c8c8c8] flex font-bold">
        <span class="w-[64px] flex items-center justify-center">属性列表</span>
        <span class="w-[65px] flex items-center justify-center bg-[#e2e2e2] text-[#909090] font-normal border-r border-[#c8c8c8]">图层管理</span>
      </div>
      <div class="relative flex-1 flex bg-white">
        <div class="w-[259px] shrink-0">
          <div class="grid grid-cols-[22px_101px_95px_41px] h-[21px] bg-[#f0f0f0] text-[#333]">
            <span class="border-r border-b border-[#d4d4d4]"></span><span class="border-r border-b border-[#d4d4d4] flex items-center justify-center">属性名称</span><span class="bg-[#7db8f8] text-white flex items-center justify-center border border-[#5aa0ee]">属性值</span><span class="border-b border-[#d4d4d4] flex items-center justify-center">附加</span>
          </div>
          <div class="grid grid-cols-[22px_101px_95px_41px] auto-rows-[21px]">
            <span class="border-r border-b border-[#d4d4d4] bg-[#f0f0f0] flex items-center justify-center text-[13px]">9</span><span class="border-r border-b border-[#d4d4d4] flex items-center pl-[3px] text-[#2b6fe0]">混凝土强度等级</span><span class="border-r border-b border-[#d4d4d4] flex items-center pl-[3px]">(C30)</span><span class="border-b border-[#d4d4d4] flex items-center pl-[13px]"><i class="block w-[14px] h-[14px] rounded-[3px] border border-[#8a8a8a]"></i></span>
            <span class="border-r border-b border-[#d4d4d4] bg-[#f0f0f0] flex items-center justify-center text-[13px]">10</span><span class="border-r border-b border-[#d4d4d4] flex items-center pl-[3px] text-[#2b6fe0]">混凝土外加剂</span><span class="border-r border-b border-[#d4d4d4] flex items-center pl-[3px]">(无)</span><span class="border-b border-[#d4d4d4]"></span>
            <span class="border-r border-b border-[#d4d4d4] bg-[#f0f0f0] flex items-center justify-center text-[13px]">11</span><span class="border-r border-b border-[#d4d4d4] flex items-center pl-[3px] text-[#2b6fe0]">泵送类型</span><span class="border-r border-b border-[#d4d4d4] flex items-center pl-[3px]">(混凝土泵)</span><span class="border-b border-[#d4d4d4]"></span>
            <span class="border-r border-b border-[#d4d4d4] bg-[#f0f0f0] flex items-center justify-center text-[13px]">12</span><span class="border-r border-b border-[#d4d4d4] flex items-center pl-[3px]">泵送高度(m)</span><span class="border-r border-b border-[#d4d4d4]"></span><span class="border-b border-[#d4d4d4]"></span>
            <span class="border-r border-b border-[#d4d4d4] bg-[#f0f0f0] flex items-center justify-center text-[13px]">13</span><span class="border-r border-b border-[#d4d4d4] flex items-center pl-[3px]">内/外墙标志</span><span class="border-r border-b border-[#d4d4d4] flex items-center pl-[3px]">(内墙)</span><span class="border-b border-[#d4d4d4] flex items-center pl-[13px]"><svg viewBox="0 0 14 14" class="w-[14px] h-[14px]"><rect width="14" height="14" rx="3" fill="#69a9f5"/><path d="M3.500 7l2.500 2.500 4.500-4.500" fill="none" stroke="#fff" stroke-width="1.800"/></svg></span>
            <span class="border-r border-b border-[#d4d4d4] bg-[#f0f0f0] flex items-center justify-center text-[13px]">14</span><span class="border-r border-b border-[#d4d4d4] flex items-center pl-[3px] text-[#2b6fe0]">类别</span><span class="border-r border-b border-[#d4d4d4] flex items-center pl-[3px]">混凝土墙</span><span class="border-b border-[#d4d4d4] flex items-center pl-[13px]"><i class="block w-[14px] h-[14px] rounded-[3px] border border-[#8a8a8a]"></i></span>
            <span class="border-r border-b border-[#d4d4d4] bg-[#f0f0f0] flex items-center justify-center text-[13px]">15</span><span class="border-r border-b border-[#d4d4d4] flex items-center pl-[3px]">起点顶标高(m)</span><span class="border-r border-b border-[#d4d4d4] flex items-center pl-[3px]">层顶标高</span><span class="border-b border-[#d4d4d4] flex items-center pl-[13px]"><i class="block w-[14px] h-[14px] rounded-[3px] border border-[#8a8a8a]"></i></span>
            <span class="border-r border-b border-[#d4d4d4] bg-[#f0f0f0] flex items-center justify-center text-[13px]">16</span><span class="border-r border-b border-[#d4d4d4] flex items-center pl-[3px]">终点顶标高(m)</span><span class="border-r border-b border-[#d4d4d4] flex items-center pl-[3px]">层顶标高</span><span class="border-b border-[#d4d4d4] flex items-center pl-[13px]"><i class="block w-[14px] h-[14px] rounded-[3px] border border-[#8a8a8a]"></i></span>
            <span class="border-r border-b border-[#d4d4d4] bg-[#f0f0f0] flex items-center justify-center text-[13px]">17</span><span class="border-r border-b border-[#d4d4d4] flex items-center pl-[3px]">起点底标高(m)</span><span class="border-r border-b border-[#d4d4d4] flex items-center pl-[3px]">层底标高</span><span class="border-b border-[#d4d4d4] flex items-center pl-[13px]"><i class="block w-[14px] h-[14px] rounded-[3px] border border-[#8a8a8a]"></i></span>
            <span class="border-r border-b border-[#d4d4d4] bg-[#f0f0f0] flex items-center justify-center text-[13px]">18</span><span class="border-r border-b border-[#d4d4d4] flex items-center pl-[3px]">终点底标高(m)</span><span class="border-r border-b border-[#d4d4d4] flex items-center pl-[3px]">层底标高</span><span class="border-b border-[#d4d4d4] flex items-center pl-[13px]"><i class="block w-[14px] h-[14px] rounded-[3px] border border-[#8a8a8a]"></i></span>
            <span class="border-r border-b border-[#d4d4d4] bg-[#f0f0f0] flex items-center justify-center text-[13px]">19</span><span class="border-r border-b border-[#d4d4d4] flex items-center pl-[3px]">备注</span><span class="border-r border-b border-[#d4d4d4]"></span><span class="border-b border-[#d4d4d4] flex items-center pl-[13px]"><i class="block w-[14px] h-[14px] rounded-[3px] border border-[#8a8a8a]"></i></span>
            <span class="border-r border-b border-[#d4d4d4] bg-[#f0f0f0] flex items-center justify-center text-[13px]">20</span><span class="border-b border-[#d4d4d4] bg-[#ededed] flex items-center pl-[3px]"><svg viewBox="0 0 11 11" class="w-[11px] h-[11px] mr-[7px]"><rect x=".5" y=".5" width="10" height="10" rx="1" fill="#fff" stroke="#777"/><path d="M3 5.500h5" stroke="#333"/></svg>钢筋业务属性</span><span class="border-b border-[#d4d4d4] bg-[#ededed]"></span><span class="border-b border-[#d4d4d4]"></span>
            <span class="border-b border-[#d4d4d4] bg-[#7db8f8] text-white font-bold flex items-center justify-center text-[13px]">21</span><span class="border-r border-b border-[#d4d4d4] flex items-center pl-[9px] text-[#2b6fe0]"><i class="block w-[16px] h-px bg-[#d4d4d4] mr-[6px]"></i>其它钢筋</span><span class="border-2 border-[#7db8f8] flex items-center justify-between pl-[3px] pr-[3px]">637<span class="w-[15px] h-[11px] rounded-[2px] border border-[#7db8f8] bg-[#e8f2fd] flex items-center justify-center text-[#3a86d8] text-[8px] leading-[6px] font-bold">···</span></span><span class="border-b border-[#d4d4d4]"></span>
            <span class="border-r border-b border-[#d4d4d4] bg-[#f0f0f0] flex items-center justify-center text-[13px]">22</span><span class="border-r border-b border-[#d4d4d4] flex items-center pl-[9px]"><i class="block w-[16px] h-px bg-[#d4d4d4] mr-[6px]"></i>保护层厚...</span><span class="border-r border-b border-[#d4d4d4] flex items-center pl-[3px]">(25)</span><span class="border-b border-[#d4d4d4] flex items-center pl-[13px]"><i class="block w-[14px] h-[14px] rounded-[3px] border border-[#8a8a8a]"></i></span>
          </div>
        </div>
        <div class="flex-1 relative"><i class="absolute left-[4px] top-[81px] w-[8px] h-[115px] rounded-[4px] bg-[#d4d4d4]"></i></div>
      </div>
    </section>
  </div>

  <!-- splitter -->
  <div class="w-[4px] shrink-0 bg-white relative"><i class="absolute left-0 top-[335px] w-[4px] h-[100px] bg-[#6e7680]"></i><i class="absolute left-0 top-[382px] w-0 h-0 border-y-[4px] border-y-transparent border-r-[4px] border-r-[#c8ccd0]"></i></div>

  <!-- canvas -->
  <div class="relative flex-1 bg-black overflow-hidden">
    <svg viewBox="495 165 773 767" class="absolute inset-0 w-[773px] h-[767px] font-['Liberation_Sans',sans-serif]" fill="#f4f4f4">
      <defs><polygon id="b" points="12,0 9.700,7 3.700,11.400 -3.700,11.400 -9.700,7 -12,0 -9.700,-7 -3.700,-11.400 3.700,-11.400 9.700,-7" fill="none" stroke="#0a6a0a"/></defs>
      <g stroke="#8a0000"><path d="M495 272.500H1248M495 465.500H1268M495 675.500H1268M495 756.500H1268M495 780.500H1268"/></g>
      <g stroke="#e80000"><path d="M495 358.500H1268M495 446.500H1268M495 534.500H1268M495 622.500H1268M495 710.500H1268M495 797.500H1268"/></g>
      <g stroke="#d00000"><path d="M570.500 272V821M666.500 272V821M762.500 272V821M858.500 272V821M955.500 272V821M1051.500 272V821M1147.500 272V821M1243.500 272V821"/></g>
      <g stroke="#0c6a0c"><path d="M495 821.500H1268M495 845.500H1268M570.500 821V868M666.500 821V868M762.500 821V868M858.500 821V868M955.500 821V868M1051.500 821V868M1147.500 821V868M1243.500 821V868"/></g>
      <use href="#b" x="507" y="272"/><use href="#b" x="507" y="358"/><use href="#b" x="507" y="446"/><use href="#b" x="507" y="467"/><use href="#b" x="507" y="534"/><use href="#b" x="507" y="622"/><use href="#b" x="507" y="710"/><use href="#b" x="513" y="780"/><use href="#b" x="507" y="797"/>
      <use href="#b" x="1267" y="446"/><use href="#b" x="1267" y="465"/><use href="#b" x="1267" y="534"/><use href="#b" x="1267" y="622"/><use href="#b" x="1267" y="710"/><use href="#b" x="1252" y="773"/><use href="#b" x="1267" y="790"/>
      <use href="#b" x="570" y="880"/><use href="#b" x="666" y="880"/><use href="#b" x="762" y="880"/><use href="#b" x="858" y="880"/><use href="#b" x="955" y="880"/><use href="#b" x="1051" y="880"/><use href="#b" x="1147" y="880"/><use href="#b" x="1243" y="880"/>
      <g font-size="19" text-anchor="middle">
        <text x="507" y="279">G</text><text x="507" y="365">F</text><text x="507" y="453">E</text><text x="507" y="474">0</text><text x="507" y="541">D</text><text x="507" y="629">C</text><text x="507" y="717">B</text><text x="507" y="804">A</text>
        <text x="1274" y="453">E</text><text x="1274" y="472">0</text><text x="1274" y="541">D</text><text x="1274" y="629">C</text><text x="1274" y="717">B</text><text x="1274" y="797">A</text>
      </g>
      <g font-size="18" text-anchor="middle">
        <text x="570" y="887">4</text><text x="666" y="887">5</text><text x="762" y="887">6</text><text x="858" y="887">7</text><text x="955" y="887">8</text><text x="1051" y="887">9</text><text x="1147" y="887">10</text><text x="1243" y="887">11</text>
        <text x="522" y="839">6000</text><text x="618" y="839">6000</text><text x="714" y="839">6000</text><text x="810" y="839">6000</text><text x="906" y="839">6000</text><text x="1003" y="839">6000</text><text x="1099" y="839">6000</text><text x="1195" y="839">6000</text>
        <text x="810" y="863">61800</text>
        <text x="514" y="786">1050</text>
      </g>
      <text x="1240" y="786" font-size="18">105</text>
      <text x="1255" y="839" font-size="18">39</text>
      <g stroke-linecap="butt">
        <path d="M544.500 880V868" stroke="#00e000" stroke-width="4"/><path d="M544.500 855l5 12h-10z" fill="#00e000"/>
        <path d="M544 885h20" stroke="#f00000" stroke-width="4"/><path d="M573 885l-11-5v10z" fill="#f00000"/>
        <circle cx="544.500" cy="885" r="5.500" fill="#0000b8"/>
      </g>
      <text x="544.500" y="855" font-size="13" text-anchor="middle" fill="#00e000">Y</text>
      <text x="581" y="892" font-size="15" text-anchor="middle" fill="#f00000">X</text>
      <circle cx="1279" cy="847" r="17" fill="#3fb96a" stroke="#e8f0ea" stroke-width="2"/>
    </svg>
    <!-- view cube toolbar -->
    <div class="absolute left-[752px] top-0 w-[21px] h-[227px] bg-[#b5b9bd] border-l border-[#9da1a5] overflow-hidden">
      <svg viewBox="0 0 21 227" class="w-[21px] h-[227px]">
        <circle cx="19" cy="20" r="11" fill="#dfe3e8" stroke="#778"/><ellipse cx="17" cy="22" rx="14" ry="4" fill="none" stroke="#667" transform="rotate(-30 17 22)"/>
        <path d="M3 50l4-9h16v22H3z" fill="#7f8fa4" stroke="#3d4650"/><text x="12" y="58" font-size="7" fill="#223">3D</text>
        <path d="M3 78l6-8h14v24H3z" fill="#d5e8fb" stroke="#3d4650"/><path d="M3 78h20M9 70v16L3 94" fill="none" stroke="#3d4650"/><path d="M11 100h8l-4 4z" fill="#444"/>
        <path d="M3 118l6-8h14v24H3z" fill="#7f8fa4" stroke="#3d4650"/><path d="M11 140h8l-4 4z" fill="#444"/>
        <circle cx="19" cy="159" r="10" fill="none" stroke="#3d4650" stroke-width="1.500"/><path d="M11 178h8l-4 4z" fill="#444"/>
        <path d="M3 186h18" stroke="#8a8e92"/><rect x="3" y="193" width="24" height="20" fill="#7f8fa4" stroke="#3d4650"/><path d="M6 198h3M6 203h3M6 208h3M12 198h6M12 203h6M12 208h6" stroke="#223"/>
      </svg>
    </div>
    <div class="absolute left-[612px] bottom-0 w-[161px] h-[15px] overflow-hidden bg-white rounded-tl-[3px] border-t border-l border-[#ddd] pl-[11px] pt-[8px] flex items-start text-[17px] whitespace-nowrap">实时资讯更新<span class="ml-[4px] w-[15px] h-[14px] bg-[#e4482f] rounded-[2px] text-white text-[10px] leading-[12px] text-center font-bold">M</span></div>
  </div>

  <!-- dialog -->
  <div class="absolute left-[525px] top-[143px] w-[692px] h-[360px] bg-[#eeeeee] border-b-2 border-r border-l border-[#c8ccd0] flex flex-col">
    <div class="h-[27px] shrink-0 bg-[#2d7fe0] text-white flex items-center justify-between pl-[9px] pr-[9px]">编辑其它钢筋
      <svg viewBox="0 0 9 9" class="w-[9px] h-[9px]"><path d="M1 1l7 7M8 1L1 8" stroke="#fff" stroke-width="1.500"/></svg>
    </div>
    <div class="pl-[13px] pr-[13px] pt-[17px] flex-1 flex flex-col">
      <div class="h-[13px]">其它钢筋列表：</div>
      <div class="relative mt-[7px] h-[250px] bg-white border border-[#c8c8c8]">
        <div class="grid grid-cols-[22px_81px_82px_64px_201px_102px_1fr] grid-rows-[20px_43px_36px]">
          <span class="bg-[#f0f0f0] border-r border-b border-[#c8c8c8]"></span>
          <span class="bg-[#7db8f8] text-white flex items-center justify-center border border-[#5aa0ee]">筋号</span>
          <span class="bg-[#f0f0f0] border-r border-b border-[#c8c8c8] flex items-center justify-center text-[#333]">钢筋信息</span>
          <span class="bg-[#f0f0f0] border-r border-b border-[#c8c8c8] flex items-center justify-center text-[#333]">图号</span>
          <span class="bg-[#f0f0f0] border-r border-b border-[#c8c8c8] flex items-center justify-center text-[#333]">钢筋图形</span>
          <span class="bg-[#f0f0f0] border-r border-b border-[#c8c8c8] flex items-center justify-center text-[#333]">长度(mm)</span>
          <span class="bg-[#f0f0f0] border-b border-[#c8c8c8] flex items-center justify-center text-[#333]">加强筋类型</span>

          <span class="bg-[#7db8f8] text-white font-bold flex items-center justify-center border border-[#5aa0ee]">1</span>
          <span class="bg-[#d6e9fd] border-r-2 border-b-2 border-[#7a7a7a] flex items-center pl-[3px]">1</span>
          <span class="border-r border-b border-[#d0d0d0] flex items-center pl-[5px]"><span class="text-[10px] -mt-[5px] mr-[1px]">Φ</span>12@150</span>
          <span class="border-r border-b border-[#d0d0d0] flex items-center pl-[2px]">637</span>
          <span class="border-r border-b border-[#d0d0d0]"><svg viewBox="0 0 201 43" class="w-[200px] h-[42px]"><path d="M39 34V11.500H197" fill="none" stroke="#000" stroke-width="2"/><text x="17" y="27" font-size="10.500" fill="#111">300</text><text x="100" y="27" font-size="10.500" fill="#111">1000</text></svg></span>
          <span class="border-r border-b border-[#d0d0d0] flex items-center pl-[3px]">1300</span>
          <span class="border-b border-[#d0d0d0] flex items-center pl-[2px]">垂直加强筋</span>

          <span class="bg-[#f0f0f0] border-r border-b border-[#c8c8c8] flex items-center justify-center text-[#333]">2</span>
          <span class="border-r border-b border-[#d0d0d0]"></span><span class="border-r border-b border-[#d0d0d0]"></span><span class="border-r border-b border-[#d0d0d0]"></span><span class="border-r border-b border-[#d0d0d0]"></span><span class="border-r border-b border-[#d0d0d0]"></span><span class="border-b border-[#d0d0d0]"></span>
        </div>
        <i class="absolute left-[14px] bottom-[3px] w-[528px] h-[8px] rounded-[4px] bg-[#cccccc]"></i>
      </div>
      <div class="mt-[6px] flex gap-[7px]">
        <button class="w-[80px] h-[26px] bg-white border border-[#c8c8c8] rounded-[3px]">插入</button>
        <button class="w-[80px] h-[26px] bg-white border border-[#c8c8c8] rounded-[3px]">删除</button>
        <button class="ml-auto w-[80px] h-[26px] bg-[#2d7fe0] text-white rounded-[3px]">确定</button>
        <button class="w-[80px] h-[26px] bg-white border border-[#c8c8c8] rounded-[3px]">取消</button>
      </div>
    </div>
    <svg viewBox="0 0 9 9" class="absolute right-[3px] bottom-[3px] w-[9px] h-[9px]"><path d="M6 0h3v2H6zM3 3.500h2v2H3zM6 3.500h3v2H6zM0 7h2v2H0zM3 7h2v2H3zM6 7h3v2H6z" fill="#8a8a8a"/></svg>
  </div>
</main>

<!-- hand-drawn annotation -->
<svg viewBox="0 0 1268 932" class="absolute inset-0 w-[1268px] h-[932px] pointer-events-none" fill="none" stroke="#19dede" stroke-width="6" stroke-linecap="round" stroke-linejoin="round">
  <path d="M1266 420V300L1255 285 1232 273 1170 258 1125 248 1100 245 1000 228 900 221 800 216 700 212 665 212 620 225 585 240 535 278 510 310 490 345 470 395 465 420 470 450 490 480 512 493 590 502 670 505 728 503 729 497"/>
  <path d="M485 460 540 466 600 474 700 484 800 490 900 490 1000 482 1100 470 1180 450 1268 425"/>
  <path d="M1102 434 1115 428 1145 425 1162 422" stroke-width="5"/>
  <path d="M317 905 340 917 356 927 376 927 390 917 397 900 395 885 380 876 350 875 338 885 337 895 345 915 365 922" stroke-width="7"/>
</svg>
</div>
</body></html>
